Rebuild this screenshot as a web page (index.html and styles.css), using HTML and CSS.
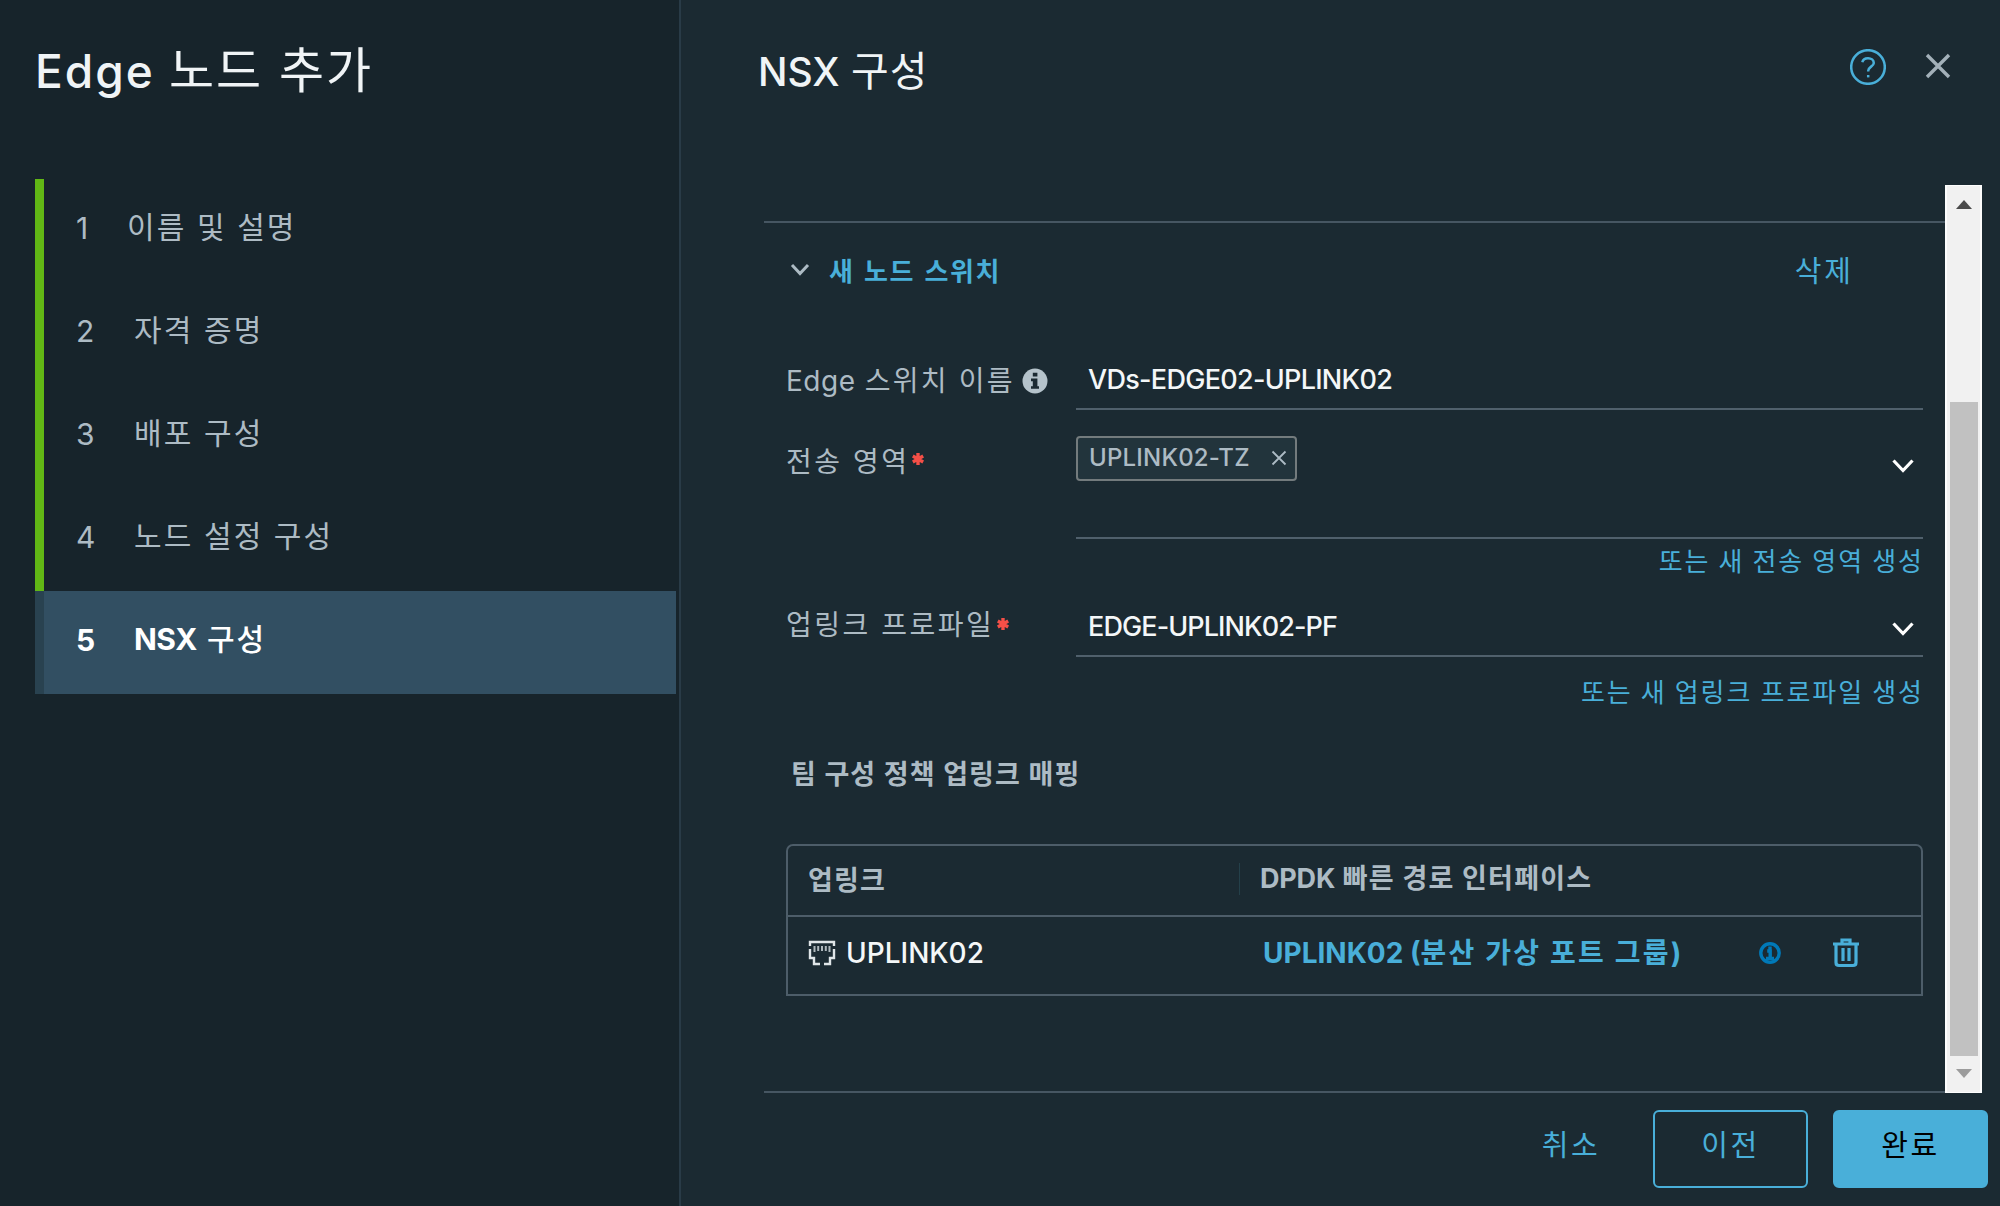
FILE: index.html
```html
<!DOCTYPE html>
<html lang="ko">
<head>
  <meta charset="UTF-8" />
  <meta name="viewport" content="width=device-width, initial-scale=1.0" />
  <title>Edge 노드 추가</title>
  <link rel="stylesheet" href="styles.css">
</head>
<body>
  <div class="wizard">
    <aside class="sidebar">
      <h1>Edge <span class="ko">노드 추가</span></h1>
      <ol class="steps">
        <li class="done"><span class="num one">1</span><span>이름 및 설명</span></li>
        <li class="done"><span class="num">2</span><span>자격 증명</span></li>
        <li class="done"><span class="num">3</span><span>배포 구성</span></li>
        <li class="done"><span class="num">4</span><span>노드 설정 구성</span></li>
        <li class="active"><span class="num">5</span><span><b>NSX</b> 구성</span></li>
      </ol>
    </aside>

    <main class="content">
      <header class="header">
        <h2>NSX <span class="ko">구성</span></h2>
        <svg class="help" viewBox="0 0 36 36" width="36" height="36">
          <circle cx="18" cy="18" r="16.8" />
          <path d="M12.3 13.2c.6-2.6 2.9-4 5.7-4 3.3 0 5.8 1.9 5.8 4.7 0 3.6-5.6 3.9-5.6 7.9v.8" />
          <path d="M18.2 26v2.4" />
        </svg>
        <svg class="close" viewBox="0 0 26 26" width="26" height="26">
          <path d="M2 2l22 22M24 2L2 24" />
        </svg>
      </header>

      <div class="body">
        <div class="scroll-area">
          <div class="switch-head">
            <svg class="caret" viewBox="0 0 20 14" width="20" height="14"><path d="M2 2l8 8.5L18 2" /></svg>
            <a class="switch-name">새 노드 스위치</a>
            <a class="delete">삭제</a>
          </div>

          <div class="row row-name">
            <label class="edge-label">Edge <span class="ko">스위치 이름</span></label>
            <svg class="info" viewBox="0 0 26 26" width="26" height="26">
              <circle cx="13" cy="13" r="12.5" />
              <path d="M10.8 4.8h4.6v3.6h-4.6zM9 10.6h6.4v7.6H17v2.6H9v-2.6h1.8v-5H9z" />
            </svg>
            <div class="field">VDs-EDGE02-UPLINK02</div>
          </div>

          <div class="row row-zone">
            <label>전송 영역</label>
            <svg class="req" viewBox="0 0 12 12" width="12" height="12"><path d="M6 0v12M.8 3l10.4 6M.8 9l10.4-6" /></svg>
            <div class="field">
              <span class="chip">UPLINK02-TZ
                <svg viewBox="0 0 16 16" width="16" height="16"><path d="M1.5 1.5l13 13M14.5 1.5l-13 13" /></svg>
              </span>
              <svg class="down" viewBox="0 0 22 16" width="22" height="16"><path d="M1.5 2.5L11 12.5l9.5-10" /></svg>
            </div>
          </div>
          <a class="create">또는 새 전송 영역 생성</a>

          <div class="row row-profile">
            <label>업링크 프로파일</label>
            <svg class="req" viewBox="0 0 12 12" width="12" height="12"><path d="M6 0v12M.8 3l10.4 6M.8 9l10.4-6" /></svg>
            <div class="field">
              <span class="value">EDGE-UPLINK02-PF</span>
              <svg class="down" viewBox="0 0 22 16" width="22" height="16"><path d="M1.5 2.5L11 12.5l9.5-10" /></svg>
            </div>
          </div>
          <a class="create second">또는 새 업링크 프로파일 생성</a>

          <h3>팀 구성 정책 업링크 매핑</h3>

          <div class="grid">
            <div class="grid-row grid-head">
              <div class="cell">업링크</div>
              <div class="cell iface"><span class="dpdk">DPDK</span> 빠른 경로 인터페이스</div>
            </div>
            <div class="grid-row">
              <div class="cell uplink">
                <svg class="port" viewBox="0 0 28 26" width="28" height="26">
                  <path d="M2 6V2h24v4M2 9v9h4v6h6M26 9v9h-4v6h-6" />
                  <path class="pins" d="M6.5 6v6M10.2 6v5M14 6v5M17.8 6v5M21.5 6v6" />
                </svg>
                <span>UPLINK02</span>
              </div>
              <div class="cell target">
                <a><span class="lat">UPLINK02 (</span>분산 가상 포트 그룹)</a>
                <svg class="note" viewBox="0 0 22 22" width="22" height="22">
                  <circle cx="11" cy="11" r="9.2" />
                  <path d="M8.2 9h3v6.5M7 16.4h8M11 4.6v3" />
                </svg>
                <svg class="trash" viewBox="0 0 26 30" width="26" height="30">
                  <path d="M0 6h26M9 5V2h8v3M3 6v18.5q0 3 3 3h14q3 0 3-3V6M10 10v13M16 10v13" />
                </svg>
              </div>
            </div>
          </div>
        </div>

        <div class="scrollbar">
          <svg viewBox="0 0 16 9" width="16" height="9"><path d="M0 9l8-9 8 9z" fill="#4b4b4b" /></svg>
          <div class="thumb"></div>
          <svg viewBox="0 0 16 9" width="16" height="9"><path d="M0 0l8 9 8-9z" fill="#9c9c9c" /></svg>
        </div>
      </div>

      <footer class="footer">
        <button class="btn link">취소</button>
        <button class="btn outline">이전</button>
        <button class="btn primary">완료</button>
      </footer>
    </main>
  </div>
</body>
</html>
```

FILE: styles.css
```css
* {
  box-sizing: border-box;
}
body {
  margin: 0;
  font-family: Inter, "Noto Sans CJK KR", sans-serif;
  background: #1b2a32;
  color: #adbbc4;
  font-size: 27px;
}
h1, h2, h3, ol {
  margin: 0;
  padding: 0;
  font-weight: 400;
}
svg {
  display: block;
  flex: none;
  fill: none;
}
a {
  color: #49afd9;
}
.wizard {
  display: flex;
  width: 2000px;
  height: 1206px;
  overflow: hidden;
}

/* left step list */
.sidebar {
  width: 681px;
  padding-left: 35px;
  background: #17242b;
  border-right: 2px solid #293b47;
}
h1 {
  height: 179px;
  padding-top: 41px;
  line-height: 60px;
  font-size: 46px;
  color: #f0f4f6;
  font-weight: 500;
  letter-spacing: 2px;
  white-space: nowrap;
}
h1 .ko {
  font-size: 49px;
  font-weight: 400;
}
.steps {
  list-style: none;
}
.steps li {
  display: flex;
  align-items: center;
  width: 641px;
  height: 103px;
  padding: 0 0 11px 32px;
  border-left: 9px solid #61b715;
  font-size: 30px;
  letter-spacing: 2.1px;
}
.steps .num {
  width: 58px;
  padding-top: 5px;
}
.steps .one {
  width: 51px;
}
.steps .active {
  border-color: #294250;
  background: #324f62;
  color: #fff;
  font-weight: 500;
}
.active .num, .active b {
  font-weight: 700;
  letter-spacing: 0;
}
.active b {
  letter-spacing: -0.5px;
}

/* right side */
.content {
  flex: 1;
  padding-left: 77px;
}
.header {
  display: flex;
  height: 185px;
  color: #f0f4f6;
}
h2 {
  flex: 1;
  padding-top: 41px;
  line-height: 60px;
  font-size: 39px;
  font-weight: 500;
}
h2 .ko {
  margin-left: 1px;
  font-size: 41px;
  font-weight: 400;
  letter-spacing: 1px;
}
.help {
  margin: 49px 39px 0 0;
  stroke: #49afd9;
  stroke-width: 2.5;
}
.close {
  margin: 53px 49px 0 0;
  stroke: #a3b0b9;
  stroke-width: 3.4;
}
.body {
  display: flex;
  width: 1222px;
  height: 908px;
  margin-left: 6px;
}
.scroll-area {
  width: 1181px;
  padding: 36px 22px 0 22px;
  border-bottom: 2px solid #465662;
}
.switch-head {
  display: flex;
  align-items: center;
  height: 102px;
  margin: 0 -22px;
  padding: 0 91px 8px 26px;
  border-top: 2px solid #465662;
}
.caret {
  margin-top: 2px;
  stroke: #adbbc4;
  stroke-width: 3;
}
.switch-name {
  flex: 1;
  margin-left: 19px;
  font-size: 26px;
  font-weight: 700;
  letter-spacing: 1.5px;
  word-spacing: 2px;
}
.delete {
  font-size: 29px;
  letter-spacing: 3px;
}
.row {
  display: flex;
  line-height: 36px;
}
.row label {
  font-size: 28px;
  letter-spacing: 2.5px;
  white-space: nowrap;
}
.row .edge-label {
  padding-top: 2px;
  font-size: 28px;
  letter-spacing: 0.5px;
}
.edge-label .ko {
  margin-left: 1px;
  letter-spacing: 2.2px;
}
.field {
  display: flex;
  width: 847px;
  margin-left: auto;
  padding-left: 12px;
  border-bottom: 2px solid #50606c;
  color: #f4f7f8;
  font-weight: 500;
  letter-spacing: -0.7px;
}
.row-name {
  height: 87px;
  padding-top: 38px;
}
.row-name .field {
  padding-top: 1px;
}
.info {
  margin: 7px 0 0 7px;
}
.info circle {
  fill: #b5c3cb;
}
.info path {
  fill: #1b2a32;
}
.req {
  margin: 11px 0 0 3px;
  stroke: #f54f47;
  stroke-width: 3.4;
}
.row-zone {
  height: 129px;
}
.row-zone label {
  padding-top: 34px;
}
.row-zone .req {
  margin-top: 43px;
}
.row-zone .field {
  padding-left: 0;
}
.chip {
  display: flex;
  align-items: center;
  justify-content: space-between;
  width: 221px;
  height: 45px;
  margin-top: 26px;
  padding: 0 8px 1px 11px;
  background: #22343c;
  border: 2px solid #737b7d;
  border-radius: 4px;
  color: #adbbc4;
  font-size: 24px;
  letter-spacing: 0.2px;
}
.chip svg {
  stroke: #adbbc4;
  stroke-width: 1.8;
}
.down {
  margin: 48px 9px 0 auto;
  stroke: #fff;
  stroke-width: 3.2;
}
.create {
  display: block;
  height: 44px;
  margin-right: -1px;
  line-height: 45px;
  text-align: right;
  font-size: 26px;
  letter-spacing: 2px;
  word-spacing: -1.3px;
}
.row-profile {
  height: 74px;
  padding-top: 24px;
}
.row-profile .field {
  padding-top: 2px;
  letter-spacing: -0.9px;
}
.row-profile .down {
  margin-top: 12px;
}
.second {
  margin-top: 13px;
}
h3 {
  height: 130px;
  padding: 41px 0 0 5px;
  line-height: 40px;
  font-size: 27px;
  font-weight: 700;
  letter-spacing: 1.1px;
}

/* uplink table */
.grid {
  height: 152px;
  border: 2px solid #4d5d69;
  border-radius: 7px 7px 0 0;
}
.grid-row {
  display: grid;
  grid-template-columns: 451px 1fr;
  align-items: center;
  height: 77px;
}
.grid-head {
  height: 71px;
  padding-bottom: 4px;
  border-bottom: 2px solid #4d5d69;
  font-size: 27px;
  font-weight: 700;
  letter-spacing: 1.2px;
}
.cell {
  padding-left: 20px;
}
.iface {
  height: 32px;
  line-height: 32px;
  border-left: 1px solid #24404a;
}
.dpdk {
  letter-spacing: -0.2px;
}
.uplink {
  display: flex;
  align-items: center;
  gap: 10px;
  padding-bottom: 5px;
  color: #f4f7f8;
  font-size: 28px;
  font-weight: 500;
}
.port {
  stroke: #dfe5e8;
  stroke-width: 2.4;
}
.port .pins {
  stroke: #aeb7bc;
  stroke-width: 2;
}
.target {
  display: flex;
  align-items: center;
  padding-left: 24px;
  padding-bottom: 5px;
}
.target a {
  width: 496px;
  margin-top: -4px;
  font-size: 28px;
  font-weight: 700;
  letter-spacing: 2.2px;
  white-space: nowrap;
}
.target .lat {
  letter-spacing: 0;
}
.note {
  stroke: #0079b8;
  stroke-width: 3.4;
}
.trash {
  margin-left: 52px;
  stroke: #49afd9;
  stroke-width: 3.2;
}

/* native looking scrollbar */
.scrollbar {
  display: flex;
  flex-direction: column;
  align-items: center;
  width: 37px;
  padding: 14px 0;
  background: #f1f1f1;
  border: 2px solid #fdfdfd;
  border-width: 1px 2px;
}
.thumb {
  width: 28px;
  height: 654px;
  margin: 193px 0 auto;
  background: #c1c1c1;
}

.footer {
  display: flex;
  justify-content: flex-end;
  padding: 17px 12px 0 0;
}
.btn {
  width: 155px;
  height: 78px;
  margin-left: 25px;
  padding: 0 0 13px 0;
  border: 2px solid #49afd9;
  border-radius: 6px;
  background: none;
  color: #49afd9;
  font-family: inherit;
  font-size: 29px;
  letter-spacing: 2.5px;
}
.btn.link {
  width: 100px;
  margin-right: 7px;
  border-color: transparent;
}
.btn.primary {
  background: #49afd9;
  color: #000;
}
```
